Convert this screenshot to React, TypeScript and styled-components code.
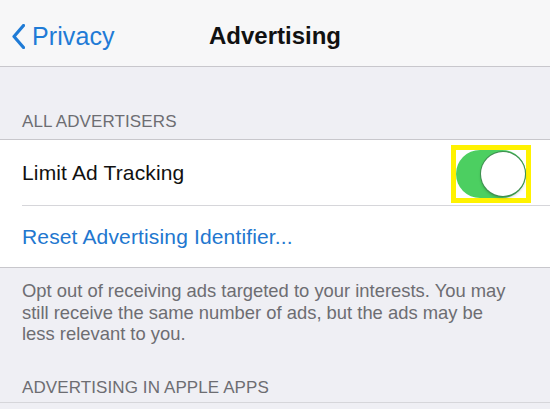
import React from 'react';
import styled, { createGlobalStyle } from 'styled-components';

const GlobalStyle = createGlobalStyle`
  html, body {
    margin: 0;
    padding: 0;
    background: #efeff4;
    font-family: "Liberation Sans", Arial, sans-serif;
    -webkit-font-smoothing: antialiased;
  }
`;

const Page = styled.div`
  width: 550px;
  height: 409px;
  overflow: hidden;
  background: #efeff4;
`;

const NavBar = styled.div`
  height: 67px;
  background: #f7f7f8;
  border-bottom: 1px solid #c8c7cc;
  display: grid;
  grid-template-columns: 1fr auto 1fr;
  align-items: center;
  box-sizing: border-box;
  padding: 6px 12px 0;
`;

const BackButton = styled.div`
  display: flex;
  align-items: center;
  gap: 7px;
  color: #1f7bd6;
  font-size: 25px;
  letter-spacing: 0.1px;
`;

const NavTitle = styled.div`
  font-size: 24px;
  font-weight: bold;
  color: #111;
`;

const SectionHeader = styled.div<{ $height: number; $bottom?: number }>`
  height: ${(p) => p.$height}px;
  box-sizing: border-box;
  display: flex;
  align-items: flex-end;
  padding: 0 22px ${(p) => p.$bottom ?? 7}px;
  font-size: 17px;
  color: #6d6d72;
  letter-spacing: 0.1px;
`;

const Group = styled.div`
  background: #fff;
  border-top: 1px solid #c8c7cc;
  border-bottom: 1px solid #c8c7cc;
`;

const Row = styled.div<{ $divider?: boolean; $height: number }>`
  height: ${(p) => p.$height}px;
  margin-left: 22px;
  padding-right: 19px;
  display: flex;
  align-items: center;
  justify-content: space-between;
  border-bottom: ${(p) => (p.$divider ? '1px solid #d6d6da' : 'none')};
`;

const RowLabel = styled.span<{ $link?: boolean }>`
  font-size: 21px;
  letter-spacing: 0.15px;
  color: ${(p) => (p.$link ? '#2277cf' : '#111')};
`;

const Highlight = styled.div`
  border: 5px solid #fff200;
  display: flex;
  margin-top: 2px;
`;

const Track = styled.div<{ $on: boolean }>`
  width: 70px;
  height: 48px;
  border-radius: 24px;
  background: ${(p) => (p.$on ? '#4ccf61' : '#e5e5ea')};
  display: flex;
  align-items: center;
  justify-content: ${(p) => (p.$on ? 'flex-end' : 'flex-start')};
  padding: 1px;
  box-sizing: border-box;
`;

const Knob = styled.div`
  width: 44px;
  height: 44px;
  border-radius: 50%;
  background: #fff;
  box-shadow: 0 0 0 1px #3f8d51, 0 2px 3px rgba(0, 0, 0, 0.25);
`;

const Footer = styled.div`
  box-sizing: border-box;
  height: 75px;
  padding: 12px 33px 0 22px;
  font-size: 18.4px;
  line-height: 21.5px;
  color: #6d6d72;
`;

const BottomHeader = styled(SectionHeader)`
  border-bottom: 1px solid #d6d6da;
`;

const Chevron = () => (
  <svg width="13" height="25" viewBox="0 0 13 25">
    <path d="M11.5 1.5 L2 12.5 L11.5 23.5" fill="none" stroke="#1f7bd6" strokeWidth="3.2" strokeLinecap="round" strokeLinejoin="round" />
  </svg>
);

const Toggle = ({ on }: { on: boolean }) => (
  <Highlight>
    <Track $on={on}>
      <Knob />
    </Track>
  </Highlight>
);

export default function App() {
  return (
    <Page>
      <GlobalStyle />
      <NavBar>
        <BackButton>
          <Chevron />
          Privacy
        </BackButton>
        <NavTitle>Advertising</NavTitle>
        <div />
      </NavBar>
      <SectionHeader $height={72}>ALL ADVERTISERS</SectionHeader>
      <Group>
        <Row $divider $height={65}>
          <RowLabel>Limit Ad Tracking</RowLabel>
          <Toggle on />
        </Row>
        <Row $height={61}>
          <RowLabel $link>Reset Advertising Identifier...</RowLabel>
        </Row>
      </Group>
      <Footer>
        Opt out of receiving ads targeted to your interests. You may still receive the same number of ads, but the ads may be less relevant to you.
      </Footer>
      <BottomHeader $height={60} $bottom={4}>ADVERTISING IN APPLE APPS</BottomHeader>
    </Page>
  );
}
